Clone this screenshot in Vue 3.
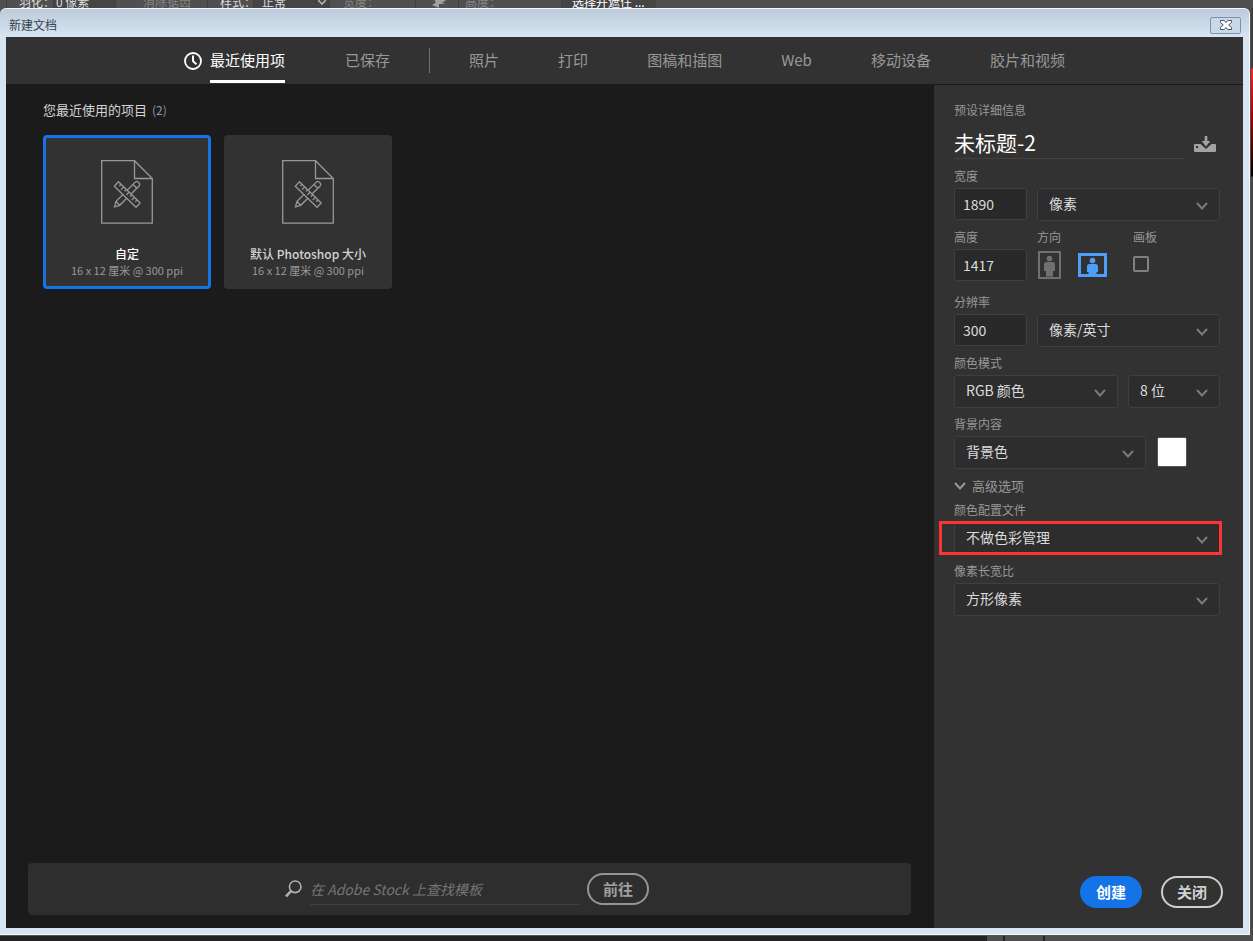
<script setup>
import { ref } from 'vue'

const activeTab = ref('最近使用项')
const savedTabs = ['已保存']
const categoryTabs = ['照片', '打印', '图稿和插图', 'Web', '移动设备', '胶片和视频']

const presets = [
  { name: '自定', size: '16 x 12 厘米 @ 300 ppi' },
  { name: '默认 Photoshop 大小', size: '16 x 12 厘米 @ 300 ppi' },
]
const selectedPreset = ref('自定')

const docName = ref('未标题-2')
const width = ref('1890')
const height = ref('1417')
const resolution = ref('300')
const landscape = ref(true)
const artboard = ref(false)
const query = ref('')
</script>

<template>
  <div class="screen">
    <div class="options" aria-hidden="true">
      <div class="options-row">
        <span class="opt w-feather">羽化：</span>
        <span class="opt box w-value">0 像素</span>
        <span class="opt dim w-alias">消除锯齿</span>
        <span class="opt w-style">样式：</span>
        <span class="opt box w-mode">正常
          <svg width="8" height="6" viewBox="0 0 8 6"><path d="M0 1l4 4 4-4" fill="none" stroke="#bbb" stroke-width="1.5" /></svg>
        </span>
        <span class="opt dim w-wide">宽度：</span>
        <span class="opt dim w-swap">
          <svg width="16" height="12" viewBox="0 0 16 12"><path d="M2 3h7V0l5 4-4 3H4zM14 8H7v4L0 9l5-3z" fill="#a0a0a0" /></svg>
        </span>
        <span class="opt dim w-high">高度：</span>
        <span class="opt box light w-mask">选择并遮住 ...</span>
      </div>
    </div>

    <div class="edge"></div>

    <section class="dialog" aria-label="新建文档">
      <header class="titlebar">
        <span>新建文档</span>
        <button class="close" type="button" aria-label="关闭窗口">
          <svg width="12" height="10" viewBox="0 0 12 10">
            <path d="M.5.5h3.7L6 2.600 7.800.5h3.700v2L8.700 5l2.800 2.500v2H7.800L6 7.400 4.200 9.500H.5v-2L3.300 5 .5 2.500z" fill="#fff" stroke="#4b5563" />
          </svg>
        </button>
      </header>

      <div class="content">
        <nav class="tabs" role="tablist">
          <svg class="clock" width="18" height="18" viewBox="0 0 18 18">
            <circle cx="9" cy="9" r="8" fill="none" stroke="#fff" stroke-width="1.800" />
            <path d="M9 3.500V9l3.400 3.400" fill="none" stroke="#fff" stroke-width="2" />
          </svg>
          <button class="tab" type="button" role="tab" :class="{ active: activeTab === '最近使用项' }" @click="activeTab = '最近使用项'">最近使用项</button>
          <button v-for="t in savedTabs" :key="t" class="tab spaced" type="button" role="tab" :class="{ active: activeTab === t }" @click="activeTab = t">{{ t }}</button>
          <span class="divider"></span>
          <div class="categories">
            <button v-for="t in categoryTabs" :key="t" class="tab" type="button" role="tab" :class="{ active: activeTab === t }" @click="activeTab = t">{{ t }}</button>
          </div>
        </nav>

        <div class="body">
          <main class="main">
            <h2 class="heading">您最近使用的项目 <span>({{ presets.length }})</span></h2>
            <div class="cards">
              <button v-for="p in presets" :key="p.name" class="card" type="button" :class="{ selected: selectedPreset === p.name }" @click="selectedPreset = p.name">
                <svg width="52" height="64" viewBox="0 0 52 64" fill="none" stroke="#989898" stroke-width="1.300">
                  <path d="M.7.7H33.500L51.300 18.500V63.200H.7z" />
                  <path d="M33.500.7V18.500H51.300" />
                  <path d="M13.500 46.800l1.400-5.300 19.600-19.600q1.300-1 2.500 0l1.300 1.300q1 1.300 0 2.500L18.700 45.300zM14.900 41.500l3.800 3.800M32 24.500l3.700 3.700" />
                  <path d="M13.300 26.200l4.200-4.400L39.200 43 35 47.300z" fill="#323232" stroke-linejoin="round" />
                  <path d="M20 24.300l-1.700 1.700M22.700 27L20 29.600M25.400 29.600l-1.700 1.700M28 32.200l-2.600 2.600M30.700 34.800L29 36.500M33.400 37.400L30.800 40M36 40l-1.700 1.700" />
                </svg>
                <strong>{{ p.name }}</strong>
                <small>{{ p.size }}</small>
              </button>
            </div>

            <form class="search" @submit.prevent>
              <svg width="17" height="18" viewBox="0 0 17 18" fill="none" stroke="#b0b0b0">
                <circle cx="10.200" cy="6.800" r="5.800" stroke-width="1.600" />
                <path d="M6 11.200L1 16.400" stroke-width="2.600" />
              </svg>
              <input v-model="query" type="text" aria-label="在 Adobe Stock 上查找模板" placeholder="在 Adobe Stock 上查找模板" />
              <button class="pill go" type="submit">前往</button>
            </form>
          </main>

          <aside class="details">
            <div class="label">预设详细信息</div>
            <div class="name-row">
              <input v-model="docName" class="doc-name" type="text" aria-label="文档名称" />
              <button class="icon-btn" type="button" aria-label="保存预设">
                <svg width="22" height="16" viewBox="0 0 22 16">
                  <path d="M0 9q0-1 1-1h5.500l5.500 5 5.500-5H21q1 0 1 1v6q0 1-1 1H1q-1 0-1-1z" fill="#a3a3a3" />
                  <path d="M10.700 0h2.600v5h3L12 10.500 7.700 5h3z" fill="#a3a3a3" />
                  <rect x="2" y="10" width="2" height="2" fill="#323232" />
                </svg>
              </button>
            </div>

            <div class="fields">
              <div class="row">
                <div class="field short">
                  <label for="w">宽度</label>
                  <input id="w" v-model="width" type="text" />
                </div>
                <div class="field grow end">
                  <div class="select">
                    <select aria-label="宽度单位"><option>像素</option></select>
                    <svg class="chev" viewBox="0 0 12 8"><path d="M1 1l5 5.500L11 1" /></svg>
                  </div>
                </div>
              </div>

              <div class="row tall">
                <div class="field short">
                  <label for="h">高度</label>
                  <input id="h" v-model="height" type="text" />
                </div>
                <div class="field orient">
                  <span class="label">方向</span>
                  <div class="orient-icons">
                    <button class="icon-btn" type="button" aria-label="纵向" :class="{ on: !landscape }" @click="landscape = false">
                      <svg width="23" height="28" viewBox="0 0 23 28">
                        <rect x="1" y="1" width="21" height="26" fill="none" stroke="currentColor" stroke-width="2" />
                        <circle cx="11.500" cy="7.500" r="2.800" fill="currentColor" />
                        <path d="M8.500 11h6q2.500 0 2.500 2.500V20h-2v5.500H8V20H6v-6.500Q6 11 8.500 11z" fill="currentColor" />
                      </svg>
                    </button>
                    <button class="icon-btn" type="button" aria-label="横向" :class="{ on: landscape }" @click="landscape = true">
                      <svg width="29" height="24" viewBox="0 0 29 24">
                        <rect x="1.500" y="1.500" width="26" height="21" fill="none" stroke="currentColor" stroke-width="3" />
                        <circle cx="14.500" cy="7.500" r="2.800" fill="currentColor" />
                        <path d="M11.500 11h6q2.500 0 2.500 2.500V19h-1.500v3h-8v-3H9v-5.500q0-2.500 2.500-2.500z" fill="currentColor" />
                      </svg>
                    </button>
                  </div>
                </div>
                <div class="field">
                  <label for="artboard">画板</label>
                  <input id="artboard" v-model="artboard" class="check" type="checkbox" />
                </div>
              </div>

              <div class="row">
                <div class="field short">
                  <label for="res">分辨率</label>
                  <input id="res" v-model="resolution" type="text" />
                </div>
                <div class="field grow end">
                  <div class="select">
                    <select aria-label="分辨率单位"><option>像素/英寸</option></select>
                    <svg class="chev" viewBox="0 0 12 8"><path d="M1 1l5 5.500L11 1" /></svg>
                  </div>
                </div>
              </div>

              <div class="row">
                <div class="field grow">
                  <label for="mode">颜色模式</label>
                  <div class="select">
                    <select id="mode"><option>RGB 颜色</option></select>
                    <svg class="chev" viewBox="0 0 12 8"><path d="M1 1l5 5.500L11 1" /></svg>
                  </div>
                </div>
                <div class="field depth end">
                  <div class="select">
                    <select aria-label="位深度"><option>8 位</option></select>
                    <svg class="chev" viewBox="0 0 12 8"><path d="M1 1l5 5.500L11 1" /></svg>
                  </div>
                </div>
              </div>

              <div class="row">
                <div class="field backdrop">
                  <label for="bg">背景内容</label>
                  <div class="select">
                    <select id="bg"><option>背景色</option></select>
                    <svg class="chev" viewBox="0 0 12 8"><path d="M1 1l5 5.500L11 1" /></svg>
                  </div>
                </div>
                <button class="swatch" type="button" aria-label="背景颜色"></button>
              </div>

              <button class="advanced" type="button">
                <svg class="chev-inline" viewBox="0 0 12 8"><path d="M1 1l5 5.500L11 1" /></svg>
                高级选项
              </button>

              <div class="field">
                <label for="profile">颜色配置文件</label>
                <div class="select marked">
                  <select id="profile"><option>不做色彩管理</option></select>
                  <svg class="chev" viewBox="0 0 12 8"><path d="M1 1l5 5.500L11 1" /></svg>
                </div>
              </div>

              <div class="field">
                <label for="ratio">像素长宽比</label>
                <div class="select">
                  <select id="ratio"><option>方形像素</option></select>
                  <svg class="chev" viewBox="0 0 12 8"><path d="M1 1l5 5.500L11 1" /></svg>
                </div>
              </div>
            </div>

            <footer class="actions">
              <button class="pill primary" type="button">创建</button>
              <button class="pill" type="button">关闭</button>
            </footer>
          </aside>
        </div>
      </div>
    </section>

    <div class="status"><span></span><span></span><span></span></div>
  </div>
</template>

<style>
body {
  background: #4d4d4d;
}
</style>

<style scoped>
.screen,
.screen * {
  box-sizing: border-box;
}
.screen {
  display: grid;
  grid-template: 8px 1fr 6px / 1fr 3px;
  min-height: 100vh;
  background: #505050;
  color: #989898;
  font: 12px/18px "Noto Sans CJK SC", "Open Sans", sans-serif;
}
button,
input,
select {
  margin: 0;
  padding: 0;
  border: 0;
  background: none;
  color: inherit;
  font: inherit;
  outline: 0;
}
svg {
  display: block;
}

/* application bar behind the dialog */
.options {
  grid-column: 1 / -1;
  overflow: hidden;
  background: #505050;
}
.options-row {
  display: flex;
  height: 16px;
  margin-top: -6px;
  padding-left: 6px;
  color: #ddd;
  line-height: 16px;
  white-space: nowrap;
}
.opt {
  display: flex;
  align-items: center;
  flex: none;
  border-left: 1px solid #404040;
}
.box {
  background: #454545;
}
.light {
  color: #fff;
}
.dim {
  color: #858585;
}
.w-feather { width: 47px; padding-left: 12px; }
.w-value { width: 62px; padding-left: 2px; }
.w-alias { width: 92px; padding-left: 27px; }
.w-style { width: 46px; padding-left: 12px; }
.w-mode { width: 76px; padding: 0 3px 0 8px; justify-content: space-between; }
.w-wide { width: 86px; padding-left: 13px; }
.w-swap { width: 43px; padding-left: 16px; }
.w-high { width: 103px; padding-left: 6px; }
.w-mask { width: 95px; padding-left: 10px; }

.edge {
  grid-area: 2 / 2;
  margin-left: 1px;
  background: linear-gradient(#3f3f3f 0 60px, #f22 61px, #900 115px, #000 168px, #484848 169px);
}
.status {
  grid-column: 1 / -1;
  display: flex;
  justify-content: flex-end;
  gap: 2px;
  border-top: 1px solid #555;
  background: #242424;
}
.status span {
  width: 16px;
  background: #4e4e4e;
}
.status span:nth-child(2) { width: 38px; }
.status span:nth-child(3) { width: 208px; }

/* dialog frame */
.dialog {
  grid-area: 2 / 1;
  display: flex;
  flex-direction: column;
  padding: 0 6px 6px;
  border: 1px solid #f4f8fc;
  border-left: 0;
  border-radius: 6px 6px 0 0;
  background: linear-gradient(#bccbda, #d7e5f2 28px);
}
.titlebar {
  display: flex;
  align-items: center;
  justify-content: space-between;
  height: 28px;
  padding: 4px 2px 0 3px;
  color: #38424c;
}
.close {
  display: grid;
  place-items: center;
  width: 31px;
  height: 17px;
  border: 1px solid #7f8fae;
  border-radius: 2px;
  background: #c9d7e6;
}
.content {
  flex: 1;
  display: flex;
  flex-direction: column;
  background: #1b1b1b;
}

/* tabs */
.tabs {
  display: flex;
  align-items: center;
  justify-content: center;
  height: 47px;
  margin-bottom: 1px;
  background: #323232;
}
.clock {
  margin-right: 8px;
}
.tab {
  height: 44px;
  border-bottom: 3px solid transparent;
  font-size: 15px;
  line-height: 41px;
  white-space: nowrap;
}
.tab.active {
  border-bottom-color: #fff;
  color: #fff;
}
.spaced {
  margin-left: 60px;
}
.divider {
  width: 1px;
  height: 25px;
  margin: 0 39px;
  background: #707070;
}
.categories {
  display: flex;
  gap: 59px;
}

/* recent presets */
.body {
  flex: 1;
  display: grid;
  grid-template-columns: 1fr 309px;
}
.main {
  display: flex;
  flex-direction: column;
  padding: 17px 23px 13px 22px;
}
.heading {
  margin: 0 0 17px 15px;
  color: #d4d4d4;
  font-size: 13px;
  font-weight: 400;
  line-height: 16px;
}
.heading span {
  margin-left: 2px;
  color: #989898;
  font-size: 12px;
}
.cards {
  display: flex;
  gap: 13px;
  margin-left: 15px;
}
.card {
  display: flex;
  flex-direction: column;
  align-items: center;
  width: 168px;
  height: 154px;
  padding-top: 22px;
  border: 3px solid #323232;
  border-radius: 4px;
  background: #323232;
  line-height: 16px;
}
.card.selected {
  border-color: #1473e6;
}
.card strong {
  margin-top: 22px;
  color: #d4d4d4;
  font-weight: 500;
}
.card.selected strong {
  color: #fff;
}
.card small {
  font-size: 11px;
}

/* stock search */
.search {
  display: flex;
  align-items: center;
  justify-content: center;
  height: 52px;
  margin-top: auto;
  padding-right: 5px;
  border-radius: 4px;
  background: #2e2e2e;
}
.search input {
  width: 270px;
  height: 32px;
  margin: 0 7px 0 8px;
  border-bottom: 1px solid #404040;
  font-size: 14px;
  font-style: italic;
}
.search input::placeholder {
  color: #757575;
}
.pill {
  width: 62px;
  height: 32px;
  border: 2px solid #d0d0d0;
  border-radius: 16px;
  color: #d0d0d0;
  font-size: 15px;
  font-weight: 700;
  line-height: 26px;
}
.go {
  border-color: #959595;
  color: #a0a0a0;
}
.primary {
  border-color: #1473e6;
  background: #1473e6;
  color: #fff;
}

/* preset details */
.details {
  display: flex;
  flex-direction: column;
  padding: 17px 20px 20px;
  background: #323232;
}
.label,
label {
  display: block;
  height: 18px;
  line-height: 16px;
}
.name-row {
  display: flex;
  align-items: center;
  gap: 9px;
  margin: 9px 0;
}
.doc-name {
  width: 231px;
  height: 30px;
  padding-bottom: 3px;
  border-bottom: 1px solid #424242;
  color: #fff;
  font-size: 21px;
}
.icon-btn {
  flex: none;
  color: #707070;
}
.icon-btn.on {
  color: #4b9ff8;
}
.fields {
  display: grid;
  gap: 8px;
  margin-right: 3px;
}
.row {
  display: flex;
  gap: 10px;
}
.tall {
  margin-bottom: 4px;
}
.field {
  display: flex;
  flex-direction: column;
  gap: 2px;
}
.short { width: 73px; }
.grow { flex: 1; }
.end { justify-content: flex-end; }
.depth { width: 92px; }
.backdrop { width: 192px; }
.orient { width: 86px; }
.field input[type="text"] {
  width: 100%;
  height: 32px;
  padding-left: 8px;
  border: 1px solid #3f3f3f;
  border-radius: 3px;
  background: #292929;
  color: #dcdcdc;
  font-size: 14px;
}
.short {
  min-height: 53px;
}
.orient-icons {
  display: flex;
  align-items: center;
  gap: 17px;
  height: 32px;
  padding-left: 1px;
}
.field .check {
  width: 16px;
  height: 16px;
  margin-top: 7px;
  border: 2px solid #808080;
  border-radius: 2px;
  appearance: none;
}
.select {
  position: relative;
  height: 33px;
}
select {
  width: 100%;
  height: 33px;
  padding: 0 11px 3px;
  border: 1px solid #3f3f3f;
  border-radius: 3px;
  background: #2d2d2d;
  color: #dcdcdc;
  font-size: 14px;
  appearance: none;
}
.chev {
  position: absolute;
  top: 14px;
  right: 12px;
  pointer-events: none;
}
.chev,
.chev-inline {
  width: 12px;
  height: 8px;
  fill: none;
  stroke: #7a7a7a;
  stroke-width: 2;
}
.chev-inline {
  stroke: #989898;
}
.marked::after {
  content: "";
  position: absolute;
  inset: -1px -2px 0 -15px;
  border: 3px solid #fb3434;
  pointer-events: none;
}
.swatch {
  align-self: flex-end;
  width: 30px;
  height: 30px;
  margin: 0 0 2px 1px;
  border: 1px solid #555;
  border-radius: 2px;
  background: #fff;
}
.advanced {
  display: flex;
  align-items: center;
  gap: 6px;
  height: 17px;
  font-size: 13px;
  line-height: 17px;
}
.actions {
  display: flex;
  justify-content: flex-end;
  gap: 19px;
  margin-top: auto;
}
</style>
